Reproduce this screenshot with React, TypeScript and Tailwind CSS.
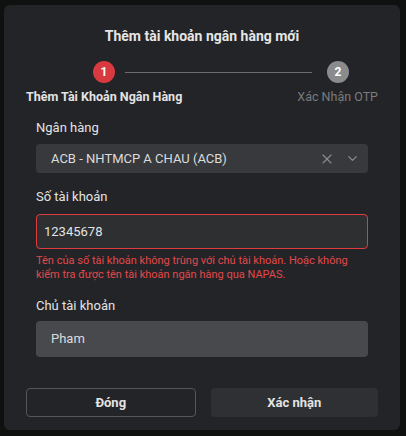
import { X, ChevronDown } from "lucide-react";

export default function App() {
  return (
    <div
      className="h-[436px] w-[406px] bg-[#0f1010] pl-[4px] pt-[5px]"
      style={{ fontFamily: "Roboto, 'Noto Sans', sans-serif" }}
    >
      <div className="flex h-[425px] w-[396px] flex-col rounded-[6px] bg-[#232427]">
        <h2 className="mt-[21px] text-center text-[14px] font-bold leading-5 text-[#e6e6e6]">
          Thêm tài khoản ngân hàng mới
        </h2>

        {/* stepper */}
        <div className="mt-[15px] flex items-center pl-[89px] pr-[51px]">
          <div className="flex h-[22px] w-[22px] items-center justify-center rounded-full bg-[#d83a40] text-[12px] font-bold text-white">
            1
          </div>
          <div className="ml-[10px] mr-[15px] h-px flex-1 bg-[#6b6c6e]" />
          <div className="flex h-[22px] w-[22px] items-center justify-center rounded-full bg-[#8a8b8d] text-[12px] font-bold text-white">
            2
          </div>
        </div>
        <div className="mt-[6px] flex justify-between pl-[22px] pr-[22px] text-[12.5px] leading-4">
          <span className="font-bold text-[#e3e3e3]">Thêm Tài Khoản Ngân Hàng</span>
          <span className="text-[#7a7b7d]">Xác Nhận OTP</span>
        </div>

        {/* form */}
        <div className="mt-[13px] flex flex-col px-[32px]">
          <label className="text-[13px] leading-5 text-[#e3e3e3]">Ngân hàng</label>
          <div className="mt-[6px] flex h-[29px] items-center rounded-[4px] bg-[#38393c] pl-[15px] pr-[8px]">
            <span className="flex-1 text-[13px] text-[#dcdcdc]">ACB - NHTMCP A CHAU (ACB)</span>
            <X size={16} strokeWidth={1.6} className="text-[#8b8c8e]" />
            <ChevronDown size={15} strokeWidth={2} className="ml-[10px] text-[#8b8c8e]" />
          </div>

          <label className="mt-[14px] text-[13px] leading-5 text-[#e3e3e3]">Số tài khoản</label>
          <div className="mt-[7px] flex h-[35px] items-center rounded-[4px] border border-[#e03c3f] bg-[#2e2f31] px-[7px]">
            <span className="text-[13px] text-[#e3e3e3]">12345678</span>
          </div>
          <p className="mt-[5px] max-w-[318px] text-[11px] leading-[14px] text-[#e2484b]">
            Tên của số tài khoản không trùng với chủ tài khoản. Hoặc không kiểm tra được tên tài khoản ngân hàng qua NAPAS.
          </p>

          <label className="mt-[14px] text-[13px] leading-5 text-[#e3e3e3]">Chủ tài khoản</label>
          <div className="mt-[5px] flex h-[36px] items-center rounded-[4px] bg-[#48494c] px-[15px]">
            <span className="text-[13px] text-[#dcdcdc]">Pham</span>
          </div>
        </div>

        {/* actions */}
        <div className="mt-[31px] flex gap-[15px] px-[22px]">
          <button className="flex h-[29px] flex-1 items-center justify-center rounded-[4px] border border-[#555659] text-[13px] font-bold text-[#e3e3e3]">
            Đóng
          </button>
          <button className="flex h-[29px] flex-1 items-center justify-center rounded-[4px] bg-[#2f3033] text-[13px] font-bold text-[#e3e3e3]">
            Xác nhận
          </button>
        </div>
      </div>
    </div>
  );
}
